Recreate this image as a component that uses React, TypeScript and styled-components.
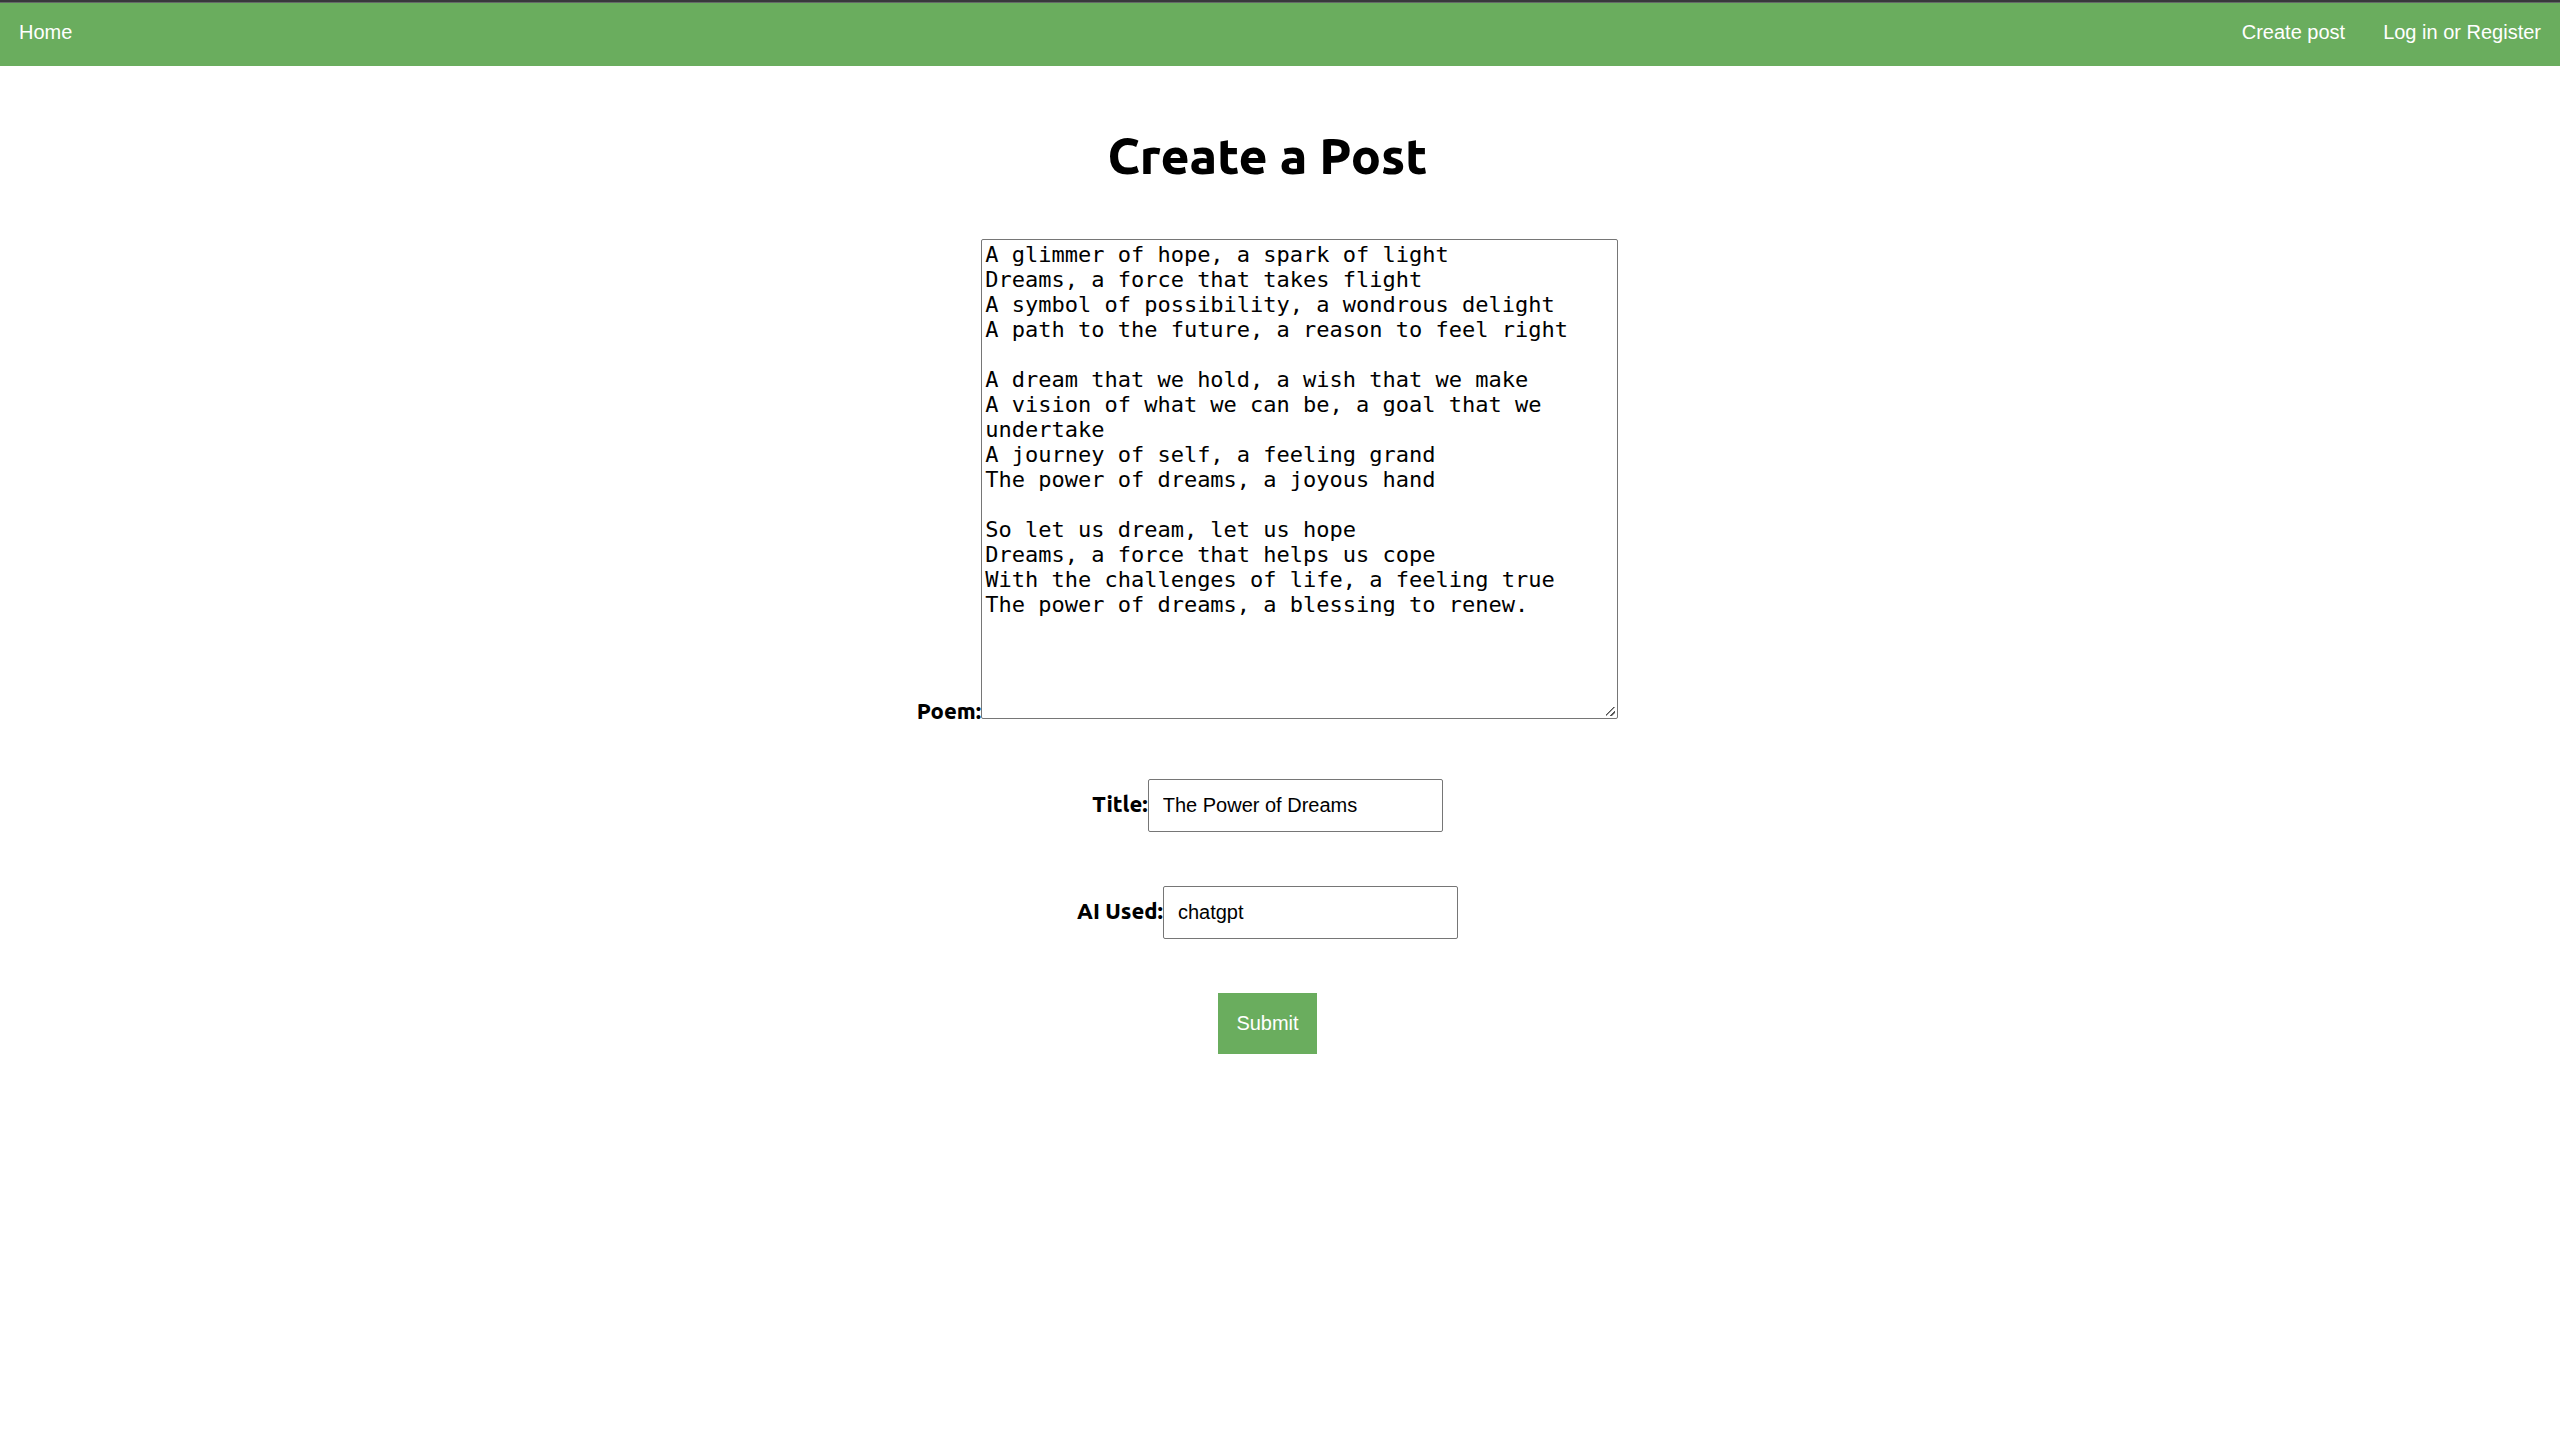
import React from 'react';
import styled, { createGlobalStyle } from 'styled-components';

const Global = createGlobalStyle`
  body { margin: 0; background: #fff; color: #000; font-family: Ubuntu, "Noto Sans", sans-serif; }
`;

const NavBar = styled.nav`
  display: flex;
  justify-content: space-between;
  border-top: 2px solid #38393c;
  background: #6aad5e;
  box-shadow: inset 0 1px #646a67;
`;

const NavGroup = styled.div`
  display: flex;
`;

const NavLink = styled.a`
  padding: 18px 19px 22px;
  color: #fff;
  font: 20px/24px "Liberation Sans", Arial, sans-serif;
  text-decoration: none;
`;

const Main = styled.main`
  padding-right: 25px;
`;

const Title = styled.h1`
  margin: 0;
  padding: 55px 0 50px;
  font-size: 50px;
  line-height: 68px;
  font-weight: 800;
  text-align: center;
`;

const Form = styled.form`
  display: flex;
  flex-direction: column;
  align-items: center;
  gap: 54px;
`;

const Row = styled.div`
  font-size: 22px;
  line-height: 28px;
`;

const Label = styled.label`
  font-weight: 800;
`;

const Poem = styled.textarea`
  box-sizing: border-box;
  width: 637px;
  height: 480px;
  margin: 0;
  padding: 2px 3px;
  border: 1px solid #767676;
  border-radius: 2px;
  font: 22px/25px "DejaVu Sans Mono", monospace;

  &::-webkit-resizer {
    background: linear-gradient(
        135deg,
        transparent 5px,
        #555 5px,
        #555 6px,
        transparent 7px,
        transparent 9px,
        #555 9px,
        #555 10px,
        transparent 11px
      )
      4px 4px / 9px 9px no-repeat;
  }
`;

const Field = styled.input`
  box-sizing: border-box;
  width: 295px;
  height: 53px;
  padding: 0 14px 1px;
  border: 1px solid #767676;
  border-radius: 2px;
  font: 20px/24px "Liberation Sans", Arial, sans-serif;
`;

const Submit = styled.button`
  padding: 18px;
  border: 0;
  background: #6aad5e;
  color: #fff;
  font: 20px/25px "Liberation Sans", Arial, sans-serif;
`;

const poem = `A glimmer of hope, a spark of light
Dreams, a force that takes flight
A symbol of possibility, a wondrous delight
A path to the future, a reason to feel right

A dream that we hold, a wish that we make
A vision of what we can be, a goal that we undertake
A journey of self, a feeling grand
The power of dreams, a joyous hand

So let us dream, let us hope
Dreams, a force that helps us cope
With the challenges of life, a feeling true
The power of dreams, a blessing to renew.`;

export default function App() {
  return (
    <>
      <Global />
      <NavBar>
        <NavLink href="#home">Home</NavLink>
        <NavGroup>
          <NavLink href="#create">Create post</NavLink>
          <NavLink href="#login">Log in or Register</NavLink>
        </NavGroup>
      </NavBar>
      <Main>
        <Title>Create a Post</Title>
        <Form onSubmit={(e) => e.preventDefault()}>
          <Row>
            <Label htmlFor="poem">Poem:</Label>
            <Poem id="poem" defaultValue={poem} spellCheck={false} />
          </Row>
          <Row>
            <Label htmlFor="title">Title:</Label>
            <Field id="title" type="text" defaultValue="The Power of Dreams" />
          </Row>
          <Row>
            <Label htmlFor="ai">AI Used:</Label>
            <Field id="ai" type="text" defaultValue="chatgpt" />
          </Row>
          <Submit type="submit">Submit</Submit>
        </Form>
      </Main>
    </>
  );
}
